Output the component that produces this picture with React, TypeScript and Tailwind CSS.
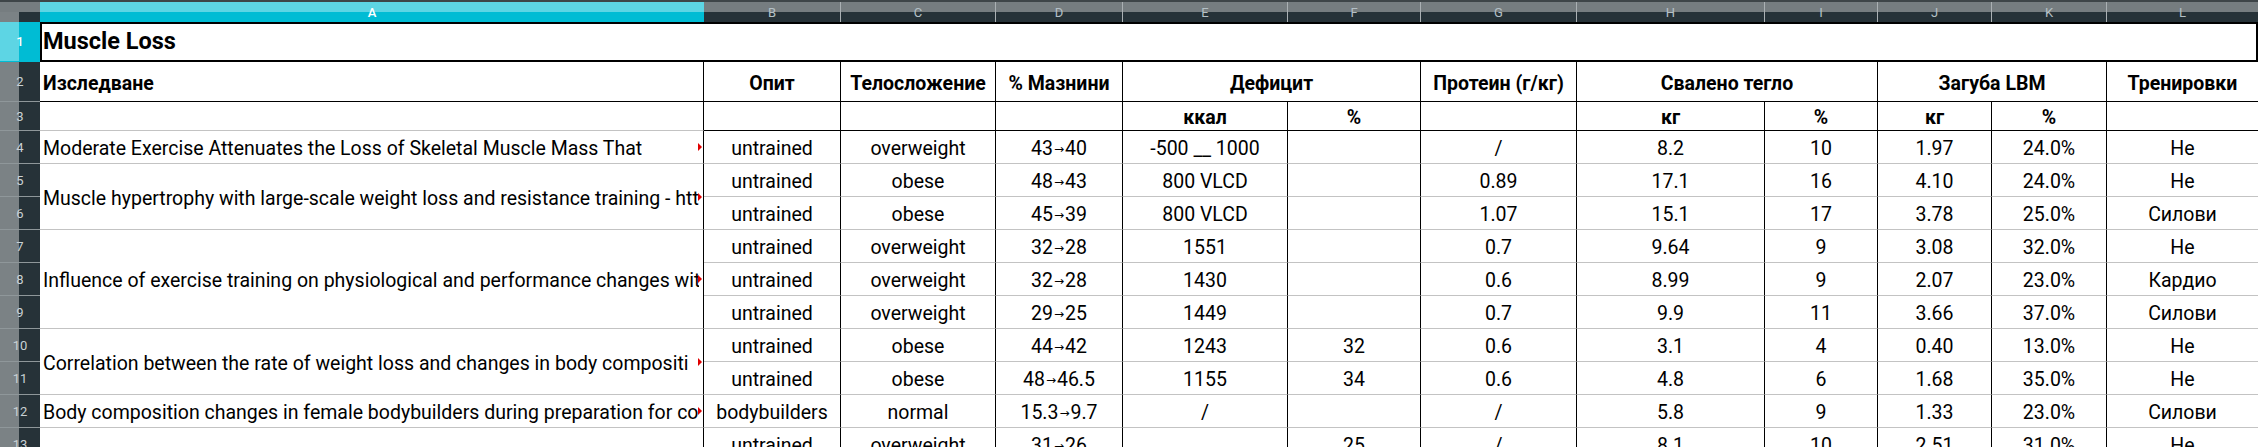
import clsx from "clsx";

const colHeads = [
  { l: "A", w: "w-[664px]", sel: true },
  { l: "B", w: "w-[137px]" },
  { l: "C", w: "w-[155px]" },
  { l: "D", w: "w-[127px]" },
  { l: "E", w: "w-[165px]" },
  { l: "F", w: "w-[133px]" },
  { l: "G", w: "w-[156px]" },
  { l: "H", w: "w-[188px]" },
  { l: "I", w: "w-[113px]" },
  { l: "J", w: "w-[114px]" },
  { l: "K", w: "w-[115px]" },
  { l: "L", w: "w-[151px]" },
];

type Row = {
  n: number;
  a?: { text: string; span: 1 | 2 | 3; mark: boolean };
  v: string[];
};

const rows: Row[] = [
  {
    n: 4,
    a: { text: "Moderate Exercise Attenuates the Loss of Skeletal Muscle Mass That", span: 1, mark: true },
    v: ["untrained", "overweight", "43→40", "-500 __ 1000", "", "/", "8.2", "10", "1.97", "24.0%", "Не"],
  },
  {
    n: 5,
    a: { text: "Muscle hypertrophy with large-scale weight loss and resistance training - https://www.ncbi.nlm.nih.gov", span: 2, mark: true },
    v: ["untrained", "obese", "48→43", "800 VLCD", "", "0.89", "17.1", "16", "4.10", "24.0%", "Не"],
  },
  { n: 6, v: ["untrained", "obese", "45→39", "800 VLCD", "", "1.07", "15.1", "17", "3.78", "25.0%", "Силови"] },
  {
    n: 7,
    a: { text: "Influence of exercise training on physiological and performance changes with weight loss in men", span: 3, mark: true },
    v: ["untrained", "overweight", "32→28", "1551", "", "0.7", "9.64", "9", "3.08", "32.0%", "Не"],
  },
  { n: 8, v: ["untrained", "overweight", "32→28", "1430", "", "0.6", "8.99", "9", "2.07", "23.0%", "Кардио"] },
  { n: 9, v: ["untrained", "overweight", "29→25", "1449", "", "0.7", "9.9", "11", "3.66", "37.0%", "Силови"] },
  {
    n: 10,
    a: { text: "Correlation between the rate of weight loss and changes in body compositi", span: 2, mark: true },
    v: ["untrained", "obese", "44→42", "1243", "32", "0.6", "3.1", "4", "0.40", "13.0%", "Не"],
  },
  { n: 11, v: ["untrained", "obese", "48→46.5", "1155", "34", "0.6", "4.8", "6", "1.68", "35.0%", "Не"] },
  {
    n: 12,
    a: { text: "Body composition changes in female bodybuilders during preparation for competition", span: 1, mark: true },
    v: ["bodybuilders", "normal", "15.3→9.7", "/", "", "/", "5.8", "9", "1.33", "23.0%", "Силови"],
  },
  {
    n: 13,
    a: { text: "", span: 1, mark: false },
    v: ["untrained", "overweight", "31→26", "", "25", "/", "8.1", "10", "2.51", "31.0%", "Не"],
  },
];

const spanCls = { 1: "", 2: "row-span-2", 3: "row-span-3" };

// narrow arrow like the sheet's font
function fmt(v: string) {
  if (!v.includes("→")) return v;
  const [from, to] = v.split("→");
  return (
    <>
      {from}
      <span className="inline-block w-[12px] text-center font-['DejaVu_Sans'] text-[12px]">→</span>
      {to}
    </>
  );
}

function RowHead({ n, sel }: { n: number; sel?: boolean }) {
  return (
    <div
      className={clsx(
        "flex items-center justify-center border-b text-[13px] leading-none",
        sel
          ? "bg-[linear-gradient(90deg,#5dd5e4_19px,#00bcd4_19px)] border-[#00bcd4] text-white font-medium"
          : "bg-[linear-gradient(90deg,#7b8285_19px,#263238_19px)] border-[#8f979a] text-[#c9d1d4]"
      )}
    >
      {n}
    </div>
  );
}

function Cell({
  children,
  head,
  last,
  dark,
  className,
}: {
  children?: React.ReactNode;
  head?: boolean;
  last?: boolean;
  dark?: boolean;
  className?: string;
}) {
  return (
    <div
      className={clsx(
        "flex items-center justify-center whitespace-nowrap pt-[4px] border-b",
        dark ? "border-black" : "border-[#c3c3c3]",
        !last && "border-r border-r-black",
        head && "font-bold",
        className
      )}
    >
      {children}
    </div>
  );
}

export default function App() {
  return (
    <div className="h-[447px] w-[2258px] overflow-hidden bg-white font-['Roboto','Noto_Sans',sans-serif] text-[19.5px] text-black">
      <div className="h-[2px] bg-[#3e4548]" />

      {/* column letters */}
      <div className="flex h-[20px]">
        <div className="flex w-[40px] flex-col">
          <div className="h-[10px] bg-[#767d80]" />
          <div className="h-[10px] bg-[linear-gradient(90deg,#7b8285_19px,#263238_19px)]" />
        </div>
        {colHeads.map((c, i) => (
          <div
            key={c.l}
            className={clsx(
              "flex items-center justify-center text-[13px] leading-none",
              c.w,
              c.sel
                ? "bg-[linear-gradient(#5dd5e4_10px,#00bcd4_10px)] text-white font-medium"
                : "bg-[linear-gradient(#767d80_10px,#263238_10px)] text-[#b4c0c6]",
              i > 0 && i < 11 && "border-r border-[#aab0b3]"
            )}
          >
            {c.l}
          </div>
        ))}
      </div>

      <div className="grid grid-cols-[40px_664px_137px_155px_127px_165px_133px_156px_188px_113px_114px_115px_151px] grid-rows-[40px_40px_29px_repeat(10,33px)]">
        {/* row 1 */}
        <RowHead n={1} sel />
        <div className="col-span-12 flex items-center border-2 border-black pl-[1px] text-[23.5px] font-bold">
          Muscle Loss
        </div>

        {/* row 2 */}
        <RowHead n={2} />
        <Cell head dark className="justify-start pl-[3px]">
          Изследване
        </Cell>
        <Cell head dark>Опит</Cell>
        <Cell head dark>Телосложение</Cell>
        <Cell head dark>% Мазнини</Cell>
        <Cell head dark className="col-span-2">
          Дефицит
        </Cell>
        <Cell head dark>Протеин (г/кг)</Cell>
        <Cell head dark className="col-span-2">
          Свалено тегло
        </Cell>
        <Cell head dark className="col-span-2">
          Загуба LBM
        </Cell>
        <Cell head dark last>
          Тренировки
        </Cell>

        {/* row 3 */}
        <RowHead n={3} />
        <Cell />
        <Cell dark />
        <Cell dark />
        <Cell dark />
        <Cell head dark>ккал</Cell>
        <Cell head dark>%</Cell>
        <Cell dark />
        <Cell head dark>кг</Cell>
        <Cell head dark>%</Cell>
        <Cell head dark>кг</Cell>
        <Cell head dark>%</Cell>
        <Cell dark last />

        {/* data */}
        {rows.map((r) => [
          <RowHead key={`h${r.n}`} n={r.n} />,
          r.a && (
            <div
              key={`a${r.n}`}
              className={clsx(
                "relative flex items-center overflow-hidden whitespace-nowrap border-b border-r border-[#c3c3c3] border-r-black pl-[3px] pr-[4px] pt-[4px]",
                spanCls[r.a.span]
              )}
            >
              <span className="min-w-0 overflow-hidden">{r.a.text}</span>
              {r.a.mark && (
                <span className="absolute right-[1px] top-1/2 -translate-y-1/2 border-y-[4px] border-l-[4px] border-y-transparent border-l-[#e00000]" />
              )}
            </div>
          ),
          ...r.v.map((v, i) => (
            <Cell key={`${r.n}-${i}`} last={i === 10}>
              {fmt(v)}
            </Cell>
          )),
        ])}
      </div>
    </div>
  );
}
